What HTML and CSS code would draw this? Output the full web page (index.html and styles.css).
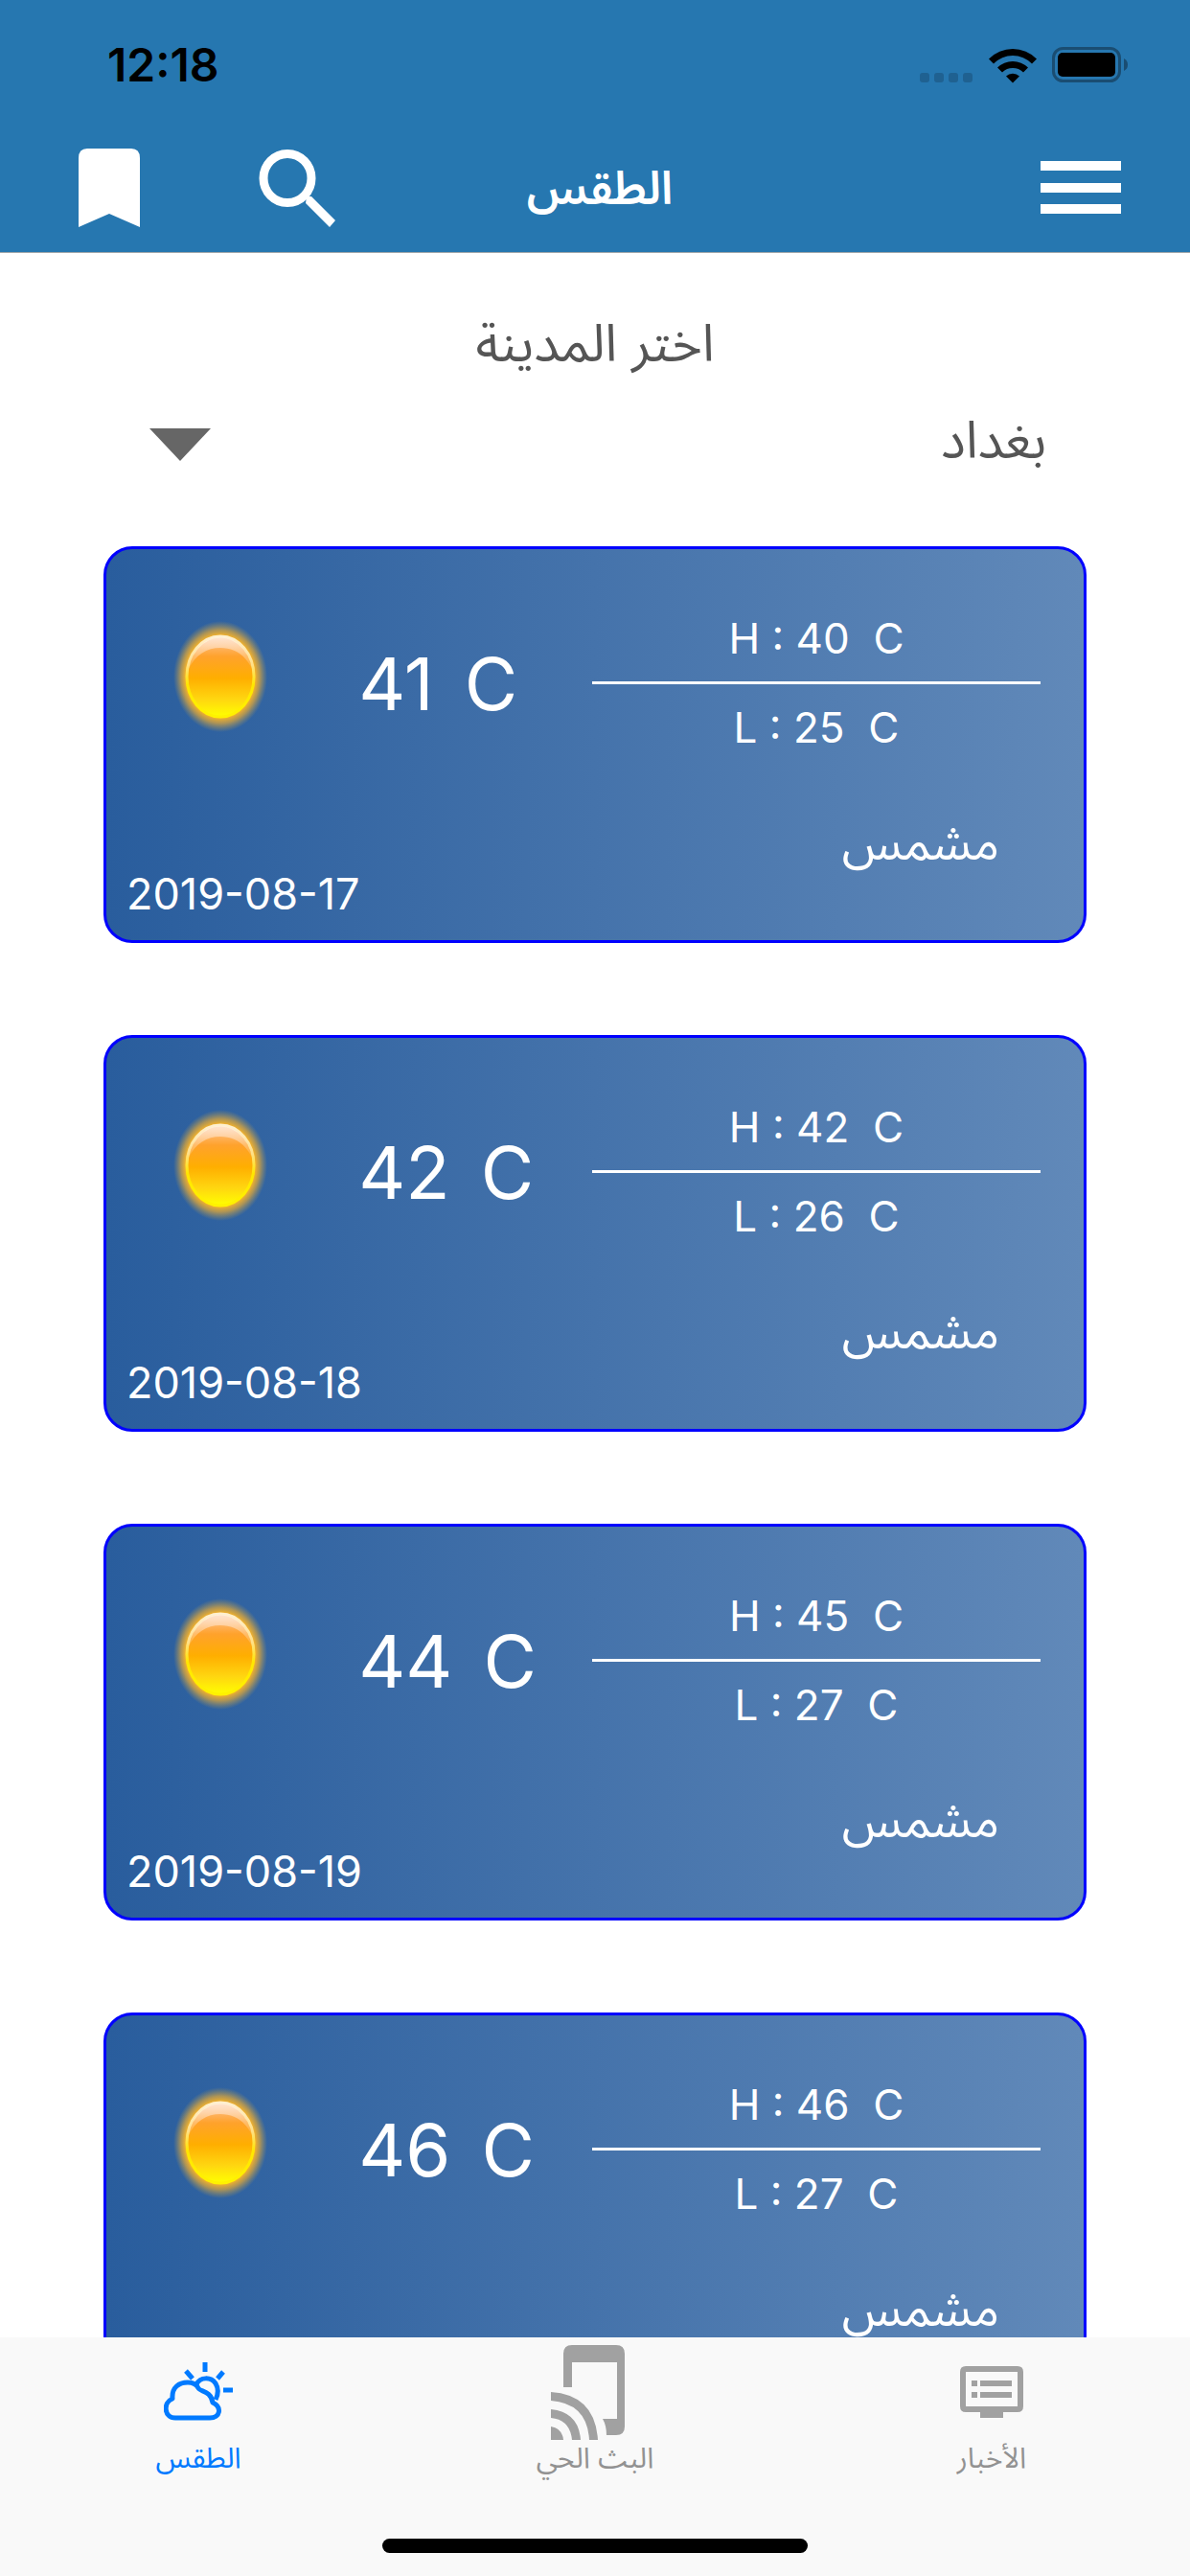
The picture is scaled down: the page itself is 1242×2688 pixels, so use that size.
FILE: index.html
```html
<!DOCTYPE html>
<html lang="ar" dir="rtl">
<head>
<meta charset="utf-8">
<meta name="viewport" content="width=device-width, initial-scale=1">
<title>الطقس</title>
<link rel="stylesheet" href="styles.css">
</head>
<body class="app">
<svg width="0" height="0" class="defs" aria-hidden="true">
  <defs>
    <radialGradient id="halo">
      <stop offset="0.74" stop-color="#f5b32a"/>
      <stop offset="0.84" stop-color="#d9a53c" stop-opacity="0.75"/>
      <stop offset="1" stop-color="#b09a55" stop-opacity="0"/>
    </radialGradient>
    <linearGradient id="disc" x1="0" y1="0" x2="0" y2="1">
      <stop offset="0" stop-color="#ffc8a0"/>
      <stop offset="0.25" stop-color="#ffa22c"/>
      <stop offset="0.52" stop-color="#ffae00"/>
      <stop offset="0.78" stop-color="#ffd610"/>
      <stop offset="1" stop-color="#ffff00"/>
    </linearGradient>
    <linearGradient id="rim" x1="0" y1="0" x2="0" y2="1">
      <stop offset="0" stop-color="#fff0d0"/>
      <stop offset="0.35" stop-color="#ffe08a"/>
      <stop offset="0.6" stop-color="#ffe600"/>
      <stop offset="1" stop-color="#fff200"/>
    </linearGradient>
    <linearGradient id="gloss" x1="0" y1="0" x2="0" y2="1">
      <stop offset="0" stop-color="#fff0e4" stop-opacity="0.7"/>
      <stop offset="1" stop-color="#fff0e4" stop-opacity="0.1"/>
    </linearGradient>
    <symbol id="sun" viewBox="0 0 100 130">
      <ellipse cx="50" cy="58" rx="49" ry="58" fill="url(#halo)"/>
      <ellipse cx="50" cy="58" rx="35" ry="42" fill="url(#disc)" stroke="url(#rim)" stroke-width="3"/>
      <path d="M17 50C22 26 37 17 50 17s28 9 33 33C76 35 64 28 50 28S24 35 17 50Z" fill="url(#gloss)"/>
    </symbol>
  </defs>
</svg>

<header class="header">
  <div class="status" dir="ltr">
    <time class="status-time">12:18</time>
    <div class="status-icons">
      <svg width="56" height="37" viewBox="0 0 56 37" fill="#1f6191" aria-hidden="true">
        <rect x="0" y="26" width="10" height="10" rx="3"/><rect x="15" y="26" width="10" height="10" rx="3"/><rect x="30" y="26" width="10" height="10" rx="3"/><rect x="45" y="26" width="10" height="10" rx="3"/>
      </svg>
      <svg width="50" height="37" viewBox="0 0 50 37" aria-hidden="true">
        <path d="M0 11.500A35 35 0 0 1 50 11.500L45 16.500A28 28 0 0 0 5 16.500Z"/>
        <path d="M9 20.500A23 23 0 0 1 41 20.500L36 25.500A16 16 0 0 0 14 25.500Z"/>
        <path d="M18 29.500A10 10 0 0 1 32 29.500L25 36.500Z"/>
      </svg>
      <svg width="80" height="38" viewBox="0 0 80 38" aria-hidden="true">
        <rect x="1.500" y="1.500" width="69" height="34" rx="10" fill="none" stroke="#1a4d72" stroke-width="3"/>
        <rect x="6" y="6" width="60" height="25" rx="5"/>
        <path d="M75 12q4 2 4 6.500T75 25Z" fill="#1a4d72"/>
      </svg>
    </div>
  </div>
  <nav class="navbar">
    <button class="icon-button" type="button" aria-label="القائمة">
      <svg width="84" height="56" viewBox="0 0 84 56" fill="#fff"><path d="M0 0h84v10H0zM0 23h84v10H0zM0 45h84v10H0z"/></svg>
    </button>
    <h1 class="title">الطقس</h1>
    <div class="actions">
      <button class="icon-button" type="button" aria-label="بحث">
        <svg width="80" height="82" viewBox="0 0 80 82"><ellipse cx="30" cy="31" rx="25" ry="25.500" fill="none" stroke="#fff" stroke-width="9"/><path d="M50 50h5L80 75l-6 7L49 57Z" fill="#fff"/></svg>
      </button>
      <button class="icon-button" type="button" aria-label="المحفوظات">
        <svg width="64" height="82" viewBox="0 0 64 82" fill="#fff"><path d="M0 10Q0 0 9 0H55Q64 0 64 10V82L32 68 0 82Z"/></svg>
      </button>
    </div>
  </nav>
</header>

<main class="content">
  <form class="picker">
    <label class="picker-label" for="city">اختر المدينة</label>
    <div class="picker-field">
      <select class="picker-select" id="city"><option>بغداد</option></select>
      <svg class="picker-arrow" width="64" height="34" viewBox="0 0 64 34" fill="#666" aria-hidden="true"><path d="M0 0h64L32 34Z"/></svg>
    </div>
  </form>

  <section class="forecast">
    <article class="card" dir="ltr">
      <div class="card-main">
        <svg class="card-icon" width="100" height="130" aria-hidden="true"><use href="#sun"/></svg>
        <p class="temp"><span>41</span> <span>C</span></p>
        <div class="range"><p class="range-high">H : 40&nbsp; C</p><p class="range-low">L : 25&nbsp; C</p></div>
      </div>
      <div class="card-foot"><time class="date">2019-08-17</time><p class="condition" dir="rtl">مشمس</p></div>
    </article>
    <article class="card" dir="ltr">
      <div class="card-main">
        <svg class="card-icon" width="100" height="130" aria-hidden="true"><use href="#sun"/></svg>
        <p class="temp"><span>42</span> <span>C</span></p>
        <div class="range"><p class="range-high">H : 42&nbsp; C</p><p class="range-low">L : 26&nbsp; C</p></div>
      </div>
      <div class="card-foot"><time class="date">2019-08-18</time><p class="condition" dir="rtl">مشمس</p></div>
    </article>
    <article class="card" dir="ltr">
      <div class="card-main">
        <svg class="card-icon" width="100" height="130" aria-hidden="true"><use href="#sun"/></svg>
        <p class="temp"><span>44</span> <span>C</span></p>
        <div class="range"><p class="range-high">H : 45&nbsp; C</p><p class="range-low">L : 27&nbsp; C</p></div>
      </div>
      <div class="card-foot"><time class="date">2019-08-19</time><p class="condition" dir="rtl">مشمس</p></div>
    </article>
    <article class="card" dir="ltr">
      <div class="card-main">
        <svg class="card-icon" width="100" height="130" aria-hidden="true"><use href="#sun"/></svg>
        <p class="temp"><span>46</span> <span>C</span></p>
        <div class="range"><p class="range-high">H : 46&nbsp; C</p><p class="range-low">L : 27&nbsp; C</p></div>
      </div>
      <div class="card-foot"><p class="condition" dir="rtl">مشمس</p></div>
    </article>
  </section>
</main>

<footer class="tabbar">
  <nav class="tabs">
    <a class="tab" href="#news">
      <svg width="66" height="100" viewBox="0 0 66 100" fill="#a1a1a1" aria-hidden="true">
        <path fill-rule="evenodd" d="M6 22H60Q66 22 66 28V64Q66 70 60 70H45V76H21V70H6Q0 70 0 64V28Q0 22 6 22ZM6 28V64H60V28Z"/>
        <path d="M12 37h6v6h-6zM21 37h33v6H21zM12 49h6v6h-6zM21 49h33v6H21z"/>
      </svg>
      <span>الأخبار</span>
    </a>
    <a class="tab" href="#live">
      <svg width="92" height="100" viewBox="0 0 92 100" fill="#a1a1a1" aria-hidden="true">
        <path d="M13 44V9Q13 0 22 0H68Q77 0 77 9V85Q77 94 68 94H58Q58 84 54 77H69V18H22V44Z"/>
        <path d="M0 49Q46 52 49 99H40Q38 61 0 58Z"/>
        <path d="M0 67Q29 70 31 99H22Q20 78 0 76Z"/>
        <path d="M0 85Q12 87 13 99H0Z"/>
      </svg>
      <span>البث الحي</span>
    </a>
    <a class="tab tab-active" href="#weather" aria-current="page">
      <svg width="72" height="100" viewBox="0 0 72 100" fill="none" stroke="#007aff" stroke-width="5" stroke-linejoin="round" aria-hidden="true">
        <path d="M12 76C0 76 -1 60 9 56C8 44 16 39 25 39C31 39 34 41 36 45C38 49 49 47 51 60C61 65 59 76 48 76Z"/>
        <path d="M34 41C38 33 49 33 54 40C57 45 57 51 54 57"/>
        <path d="M43 18v10M23 27l7 8M62 28l-6 7M62 47h10"/>
      </svg>
      <span>الطقس</span>
    </a>
  </nav>
  <div class="home-indicator"></div>
</footer>
</body>
</html>
```
FILE: styles.css
```css
* {
  box-sizing: border-box;
}

body,
h1,
p {
  margin: 0;
}

.app {
  display: flex;
  flex-direction: column;
  height: 100vh;
  background: #fff;
  font-family: Inter, "Noto Sans Arabic", "Noto Sans", "DejaVu Sans", sans-serif;
}

.defs {
  position: absolute;
}

.header {
  flex: none;
  background: #2677b0;
  border-bottom: 1px solid #a0a6aa;
}

.status {
  display: flex;
  justify-content: space-between;
  align-items: center;
  height: 132px;
  padding: 4px 64px 0 112px;
}

.status-time {
  font-size: 48px;
  font-weight: 600;
  line-height: 60px;
}

.status-icons {
  display: flex;
  align-items: center;
  gap: 16px;
}

.navbar {
  display: grid;
  grid-template-columns: 1fr auto 1fr;
  align-items: center;
  height: 131px;
  padding: 0 72px 4px 82px;
}

.icon-button {
  display: flex;
  justify-self: start;
  padding: 0;
  border: 0;
  background: none;
}

.title {
  color: #fff;
  font-size: 48px;
  font-weight: 600;
  line-height: 72px;
}

.actions {
  display: flex;
  justify-self: end;
  align-items: center;
  gap: 124px;
}

.content {
  flex: 1;
  min-height: 0;
  overflow-y: auto;
  scrollbar-width: none;
}

.picker {
  display: flex;
  flex-direction: column;
  padding: 58px 150px 0;
  color: #555;
  font-size: 54px;
}

.picker-label {
  line-height: 72px;
  text-align: center;
}

.picker-field {
  position: relative;
  display: flex;
  margin-top: 28px;
}

.picker-select {
  flex: 1;
  height: 72px;
  padding: 0;
  border: 0;
  appearance: none;
  background: none;
  color: inherit;
  font: inherit;
}

.picker-arrow {
  position: absolute;
  top: 25px;
  left: 6px;
  pointer-events: none;
}

.forecast {
  display: flex;
  flex-direction: column;
  gap: 96px;
  padding: 76px 108px 96px;
}

.card {
  display: flex;
  flex-direction: column;
  min-height: 414px;
  padding-top: 66px;
  border: 3px solid #00f;
  border-radius: 30px;
  background: linear-gradient(90deg, #295d9d, #6189b9);
  color: #fff;
}

.card-main {
  display: grid;
  grid-template-columns: 27fr 25fr 48fr;
  align-items: center;
  padding-right: 45px;
}

.card-icon {
  margin-left: 69px;
}

.temp {
  display: flex;
  gap: 32px;
  font-size: 76px;
  font-weight: 400;
  line-height: 90px;
}

.range {
  font-size: 44px;
  line-height: 54px;
  text-align: center;
}

.range-high {
  padding-bottom: 18px;
  border-bottom: 3px solid #fff;
}

.range-low {
  padding-top: 18px;
}

.card-foot {
  display: flex;
  flex: 1;
  justify-content: space-between;
  padding: 57px 88px 21px 21px;
}

.date {
  align-self: flex-end;
  font-size: 45px;
  line-height: 54px;
}

.condition {
  margin-left: auto;
  font-size: 51px;
  line-height: 72px;
}

.tabbar {
  flex: none;
  padding-bottom: 24px;
  background: #f9f9f9;
}

.tabs {
  display: grid;
  grid-template-columns: repeat(3, 1fr);
  padding-top: 8px;
}

.tab {
  display: flex;
  flex-direction: column;
  align-items: center;
  color: #929292;
  font-size: 30px;
  line-height: 34px;
  text-decoration: none;
}

.tab-active {
  color: #007aff;
}

.home-indicator {
  width: 444px;
  height: 15px;
  margin: 68px auto 0;
  border-radius: 8px;
  background: #000;
}
```
